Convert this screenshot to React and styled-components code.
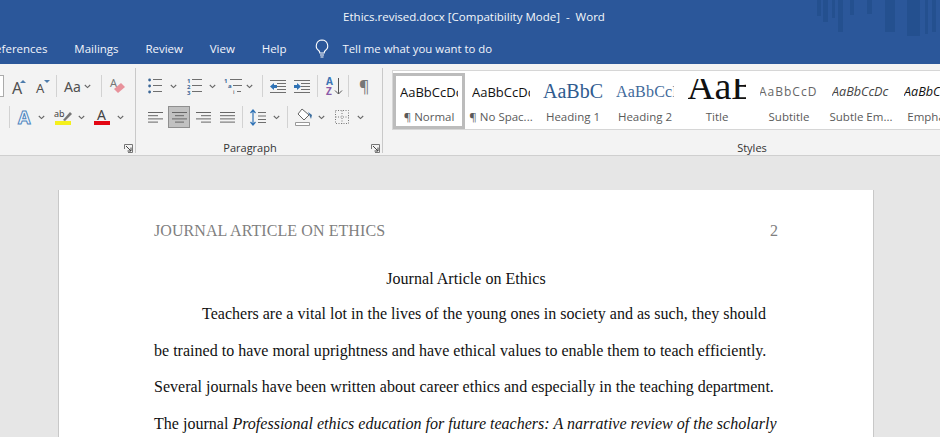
import React from "react";
import styled, { createGlobalStyle } from "styled-components";

const UI = `"Open Sans", "Noto Sans", sans-serif`;
const Global = createGlobalStyle`
  html, body { margin: 0; padding: 0; background: #e6e6e6; overflow: hidden; }
  #root { width: 940px; height: 437px; overflow: hidden; }
`;
const Shell = styled.div`width: 940px; height: 437px; overflow: hidden; display: flex; flex-direction: column; font-family: ${UI};`;
const TitleBar = styled.header`position: relative; flex: none; height: 64px; background: #2b579a; color: #fff; overflow: hidden;`;
const TitleText = styled.div`height: 32px; padding-left: 8px; display: flex; align-items: center; justify-content: center; font-size: 11.5px; white-space: pre; color: #f4f7fb;`;
const Tabs = styled.nav`height: 32px; margin-left: -12px; display: flex; align-items: center; gap: 26.8px; font-size: 11.5px; white-space: nowrap; color: #f2f5fa;`;
const Tell = styled.span`display: inline-flex; align-items: center; gap: 13px; margin-left: 2px; font-size: 11.4px;`;
const Watermark = styled.svg`position: absolute; top: 0; right: 0; width: 123px; height: 40px;`;

const Ribbon = styled.section`flex: none; height: 92px; box-sizing: border-box; padding: 4px 0 3px; display: flex; background: #f3f3f3; border-bottom: 1px solid #cfcfcf; overflow: hidden;`;
const Group = styled.div`flex: none; width: ${p => p.$w}px; box-sizing: border-box; height: 85px; padding-top: 7px; border-right: ${p => p.$plain ? "none" : "1px solid #c9c9c9"}; display: flex; flex-direction: column;`;
const ToolRow = styled.div`display: flex; align-items: center; height: 22px; padding-left: ${p => p.$pad || 0}px; & + & { margin-top: 9px; }`;
const Slot = styled.span`flex: none; display: inline-flex; align-items: center; justify-content: center; width: ${p => p.$w}px; height: 22px; margin-left: ${p => p.$ml || 0}px;`;
const Sep = styled.i`flex: none; width: 1px; height: 22px; background: #d2d2d2; margin-left: ${p => p.$ml}px;`;
const FontBox = styled.span`flex: none; width: 4px; height: 22px; box-sizing: border-box; background: #fff; border: 1px solid #ababab; border-left: none;`;
const ActiveButton = styled(Slot)`box-sizing: border-box; background: #c1c1c1; border: 1px solid #8f8f8f;`;
const GroupFoot = styled.div`position: relative; height: 14px; margin-top: ${p => p.$mt || 13}px; padding-right: ${p => p.$pr || 0}px; text-align: center; font-size: 11px; line-height: 14px; color: #333;`;
const Launcher = styled.svg`position: absolute; right: 2px; top: 3px; width: 9px; height: 9px;`;

const Gallery = styled.div`margin-left: 9px; margin-top: -5px; height: 60px; box-sizing: border-box; display: flex; padding-top: 2px; background: #fff; border: 1px solid #d6d6d6; border-right: none; width: 640px;`;
const StyleItem = styled.div`flex: none; width: 72px; height: 56px; box-sizing: border-box; border: 3px solid ${p => p.$on ? "#bcbcbc" : "transparent"}; display: flex; flex-direction: column; align-items: center; overflow: hidden;`;
const Preview = styled.div`width: ${p => p.$wide ? 60 : 58}px; height: 29px; margin-top: 1px; display: flex; align-items: center; overflow: hidden; white-space: nowrap;`;
const StyleLabel = styled.div`font-size: 11.5px; line-height: 16px; margin-top: 3px; color: #5a5a5a; white-space: nowrap;`;
const Body = styled.span`font: 13px ${UI}; color: #111;`;
const Head1 = styled.span`font: 20px "Liberation Serif", serif; color: #2f5b8f;`;
const Head2 = styled.span`font: 16px "Liberation Serif", serif; color: #3f6a9b; letter-spacing: .2px;`;
const Big = styled.span`display: block; height: 20px; margin: 0 0 5px -1px; overflow: hidden; font: 38px/14px "Liberation Serif", serif; color: #111;`;
const Sub = styled.span`font: 12px ${UI}; color: #666; letter-spacing: 1px; margin-left: -1px;`;
const Em = styled.span`font: italic 12.6px ${UI}; color: ${p => p.$c};`;

const Canvas = styled.main`flex: 1; min-height: 0; padding: 34px 0 0 58px; background: #e6e6e6;`;
const Page = styled.article`width: 816px; min-height: 300px; padding: 31px 95px 0; box-sizing: border-box; background: #fff; border: solid #c8c8c8; border-width: 0 1px; font: 16px "Liberation Serif", serif; color: #111; white-space: nowrap;`;
const RunningHead = styled.div`display: flex; justify-content: space-between; line-height: 20px; margin-bottom: 20px; color: #7f7f7f; letter-spacing: .08px;`;
const DocTitle = styled.div`text-align: center; line-height: 36.5px; letter-spacing: .03px; margin-bottom: -1.5px;`;
const Para = styled.p`margin: 0; line-height: 36.5px; letter-spacing: .015px;`;
const Indent = styled.span`display: inline-block; width: 48px;`;

const IconSvg = styled.svg`overflow: visible; display: block;`;
const I = ({ w, h, children }) => <IconSvg width={w} height={h} viewBox={`0 0 ${w} ${h}`} fill="none">{children}</IconSvg>;
const Chev = () => <I w={7} h={5}><path d="M.8 1l2.7 2.6L6.2 1" stroke="#666" strokeWidth="1.1" /></I>;
const L = ({ y, x1, x2, c = "#6f6f6f" }) => <path d={`M${x1} ${y + .5}H${x2}`} stroke={c} />;
const T = ({ x, y, s, c = "#555", b, children }) => <text x={x} y={y} fontSize={s} fill={c} fontWeight={b ? 700 : 400} fontFamily="Noto Sans, sans-serif">{children}</text>;
const GrowA = ({ flip }) => <I w={15} h={18}><T x={0} y={flip ? 16 : 17} s={flip ? 13 : 16} c="#505050">A</T>{flip ? <path d="M8 3h6l-3 3z" fill="#4d7cac" /> : <path d="M8 6h6l-3-3z" fill="#4d7cac" />}</I>;
const Eraser = () => <I w={16} h={18}><T x={0} y={10} s={11} c="#777">A</T><path d="M4 12l7-6 4 4-7 6z" fill="#e8929b" /></I>;
const OutlineA = () => <I w={15} h={18}><text x={0} y={16} fontSize={18} fontWeight="700" fontFamily="Noto Sans, sans-serif" fill="#f3f7fb" stroke="#4f86bf" strokeWidth="1">A</text></I>;
const Highlight = () => <I w={18} h={18}><T x={0} y={9} s={9} c="#444">ab</T><path d="M9 12l7-8 2 2-7 7z" fill="#777" /><path d="M1 13h16v4H1z" fill="#f5f01c" /></I>;
const RedA = () => <I w={16} h={18}><T x={3} y={12} s={14} c="#444">A</T><path d="M0 13h16v4H0z" fill="#e30613" /></I>;
const Bullets = () => <I w={15} h={15}>{[1, 7, 13].map(y => <g key={y}><circle cx="1.6" cy={y} r="1.4" fill="#3b6696" /><L y={y - 1} x1={5} x2={14} /></g>)}</I>;
const Numbers = () => <I w={15} h={15}>{[1, 7, 13].map((y, i) => <g key={y}><T x={0} y={y + 2.5} s={6} c="#3b6696" b>{i + 1}</T><L y={y - 1} x1={5} x2={15} /></g>)}</I>;
const Multi = () => <I w={19} h={16}><T x={0} y={5} s={6} c="#3b6696" b>1</T><L y={1} x1={6} x2={18} /><T x={4} y={10} s={6} c="#3b6696" b>a</T><L y={7} x1={9} x2={18} /><T x={9} y={16} s={6} c="#444">i</T><L y={13} x1={13} x2={17} /></I>;
const IndentIcon = ({ rev }) => <I w={16} h={13}>{[0, 3, 6, 9, 12].map(y => <L key={y} y={y} x1={y === 0 || y === 12 ? 0 : 7} x2={16} />)}<path d={rev ? "M0 6.5L4 3v2h3v3H4v2z" : "M7 6.5L3 3v2H0v3h3v2z"} fill="#2f72b5" /></I>;
const Sort = () => <I w={17} h={20}><T x={0} y={9} s={10} c="#3b75b5" b>A</T><T x={0} y={19} s={10} c="#8b5aa8" b>Z</T><path d="M12.5 2v16M9 14.5l3.500 3.500 3.500-3.500" stroke="#555" /></I>;
const Pilcrow = () => <I w={15} h={18}><T x={2} y={15} s={16} c="#777">¶</T></I>;
const Align = ({ k }) => {
  const r = k === "j"
    ? [[0, 15], [0, 15], [0, 15], [0, 15]]
    : k === "l" ? [[0, 15], [0, 10], [0, 15], [0, 10]]
    : k === "c" ? [[0, 15], [3, 12], [0, 15], [3, 12]]
    : [[0, 15], [5, 15], [0, 15], [5, 15]];
  return <I w={15} h={11}>{r.map(([a, b], i) => <L key={i} y={i * 3.2} x1={a} x2={b} c="#666" />)}</I>;
};
const Spacing = () => <I w={16} h={17}><path d="M3 1v15M.5 4L3 1l2.500 3M.5 13L3 16l2.500-3" stroke="#2f72b5" strokeWidth="1.2" />{[3, 6.5, 10, 13].map(y => <L key={y} y={y} x1={8} x2={16} />)}</I>;
const Shade = () => <I w={17} h={18}><path d="M7 1l7 6-5 5-6-6z" fill="#fff" stroke="#666" /><path d="M13 4l4 3-1 4z" fill="#3f6f9f" /><path d="M.5 14.500h14v3H.5z" fill="#fff" stroke="#999" /></I>;
const Borders = () => <I w={14} h={14}><path d="M.5.5h13v13H.5zM7 .5v13M.5 7h13" stroke="#777" strokeDasharray="1 1.500" /></I>;
const Launch = () => <Launcher viewBox="0 0 9 9" fill="none"><path d="M.5 5V.5H8.500M8.500 .5V8.500H4" stroke="#777" /><path d="M2 2l5 5M7 3.500V7H3.500" stroke="#444" /></Launcher>;
const Bulb = () => <I w={14} h={19}><path d="M7 1a5.800 5.800 0 0 0-3.300 10.500c.8.7 1.100 1.500 1.100 2.500h4.400c0-1 .3-1.800 1.100-2.500A5.800 5.800 0 0 0 7 1zM5 16h4M5.500 18h3" stroke="#fff" strokeWidth="1.100" /></I>;

const bars = [[0, 4, 16], [6, 5, 22], [15, 3, 18], [21, 5, 32], [33, 4, 15], [50, 5, 14], [68, 10, 32], [90, 13, 36], [108, 3, 34], [115, 4, 32]];

export default function App() {
  return (
    <Shell>
      <Global />
      <TitleBar>
        <Watermark viewBox="0 0 123 40">
          {bars.map(([x, w, h]) => <rect key={x} x={x} y={0} width={w} height={h} fill="#1f4a86" opacity=".55" />)}
        </Watermark>
        <TitleText>Ethics.revised.docx [Compatibility Mode]  -  Word</TitleText>
        <Tabs>
          <span>References</span><span>Mailings</span><span>Review</span><span>View</span><span>Help</span>
          <Tell><Bulb /><span>Tell me what you want to do</span></Tell>
        </Tabs>
      </TitleBar>
      <Ribbon>
        <Group $w={136}>
          <ToolRow>
            <FontBox />
            <Slot $ml={8} $w={15}><GrowA /></Slot>
            <Slot $ml={9} $w={15}><GrowA flip /></Slot>
            <Sep $ml={5} />
            <Slot $ml={7} $w={17}><I w={17} h={16}><T x={0} y={14} s={14} c="#505050">Aa</T></I></Slot>
            <Slot $ml={3} $w={7}><Chev /></Slot>
            <Sep $ml={10} />
            <Slot $ml={8} $w={16}><Eraser /></Slot>
          </ToolRow>
          <ToolRow>
            <Sep $ml={9} />
            <Slot $ml={8} $w={15}><OutlineA /></Slot>
            <Slot $ml={5} $w={7}><Chev /></Slot>
            <Slot $ml={9} $w={18}><Highlight /></Slot>
            <Slot $ml={6} $w={7}><Chev /></Slot>
            <Slot $ml={9} $w={16}><RedA /></Slot>
            <Slot $ml={7} $w={7}><Chev /></Slot>
          </ToolRow>
          <GroupFoot><Launch /></GroupFoot>
        </Group>
        <Group $w={247}>
          <ToolRow $pad={12}>
            <Slot $w={15}><Bullets /></Slot>
            <Slot $ml={7} $w={7}><Chev /></Slot>
            <Slot $ml={10} $w={15}><Numbers /></Slot>
            <Slot $ml={7} $w={7}><Chev /></Slot>
            <Slot $ml={8} $w={19}><Multi /></Slot>
            <Slot $ml={3} $w={7}><Chev /></Slot>
            <Sep $ml={9} />
            <Slot $ml={7} $w={16}><IndentIcon rev /></Slot>
            <Slot $ml={8} $w={16}><IndentIcon /></Slot>
            <Sep $ml={7} />
            <Slot $ml={8} $w={17}><Sort /></Slot>
            <Sep $ml={5} />
            <Slot $ml={8} $w={15}><Pilcrow /></Slot>
          </ToolRow>
          <ToolRow $pad={12}>
            <Slot $w={15}><Align k="l" /></Slot>
            <ActiveButton $ml={5} $w={22}><Align k="c" /></ActiveButton>
            <Slot $ml={6} $w={15}><Align k="r" /></Slot>
            <Slot $ml={9} $w={15}><Align k="j" /></Slot>
            <Sep $ml={7} />
            <Slot $ml={7} $w={16}><Spacing /></Slot>
            <Slot $ml={7} $w={7}><Chev /></Slot>
            <Sep $ml={7} />
            <Slot $ml={7} $w={17}><Shade /></Slot>
            <Slot $ml={6} $w={7}><Chev /></Slot>
            <Slot $ml={10} $w={14}><Borders /></Slot>
            <Slot $ml={8} $w={7}><Chev /></Slot>
          </ToolRow>
          <GroupFoot $pr={18}>Paragraph<Launch /></GroupFoot>
        </Group>
        <Group $w={738} $plain>
          <Gallery>
            <StyleItem $on><Preview><Body>AaBbCcDc</Body></Preview><StyleLabel>¶ Normal</StyleLabel></StyleItem>
            <StyleItem><Preview><Body>AaBbCcDc</Body></Preview><StyleLabel>¶ No Spac...</StyleLabel></StyleItem>
            <StyleItem><Preview $wide><Head1>AaBbC</Head1></Preview><StyleLabel>Heading 1</StyleLabel></StyleItem>
            <StyleItem><Preview><Head2>AaBbCcI</Head2></Preview><StyleLabel>Heading 2</StyleLabel></StyleItem>
            <StyleItem><Preview><Big>AaB</Big></Preview><StyleLabel>Title</StyleLabel></StyleItem>
            <StyleItem><Preview><Sub>AaBbCcD</Sub></Preview><StyleLabel>Subtitle</StyleLabel></StyleItem>
            <StyleItem><Preview><Em $c="#444">AaBbCcDc</Em></Preview><StyleLabel>Subtle Em...</StyleLabel></StyleItem>
            <StyleItem><Preview><Em $c="#111">AaBbCcDc</Em></Preview><StyleLabel>Emphasis</StyleLabel></StyleItem>
          </Gallery>
          <GroupFoot $mt={11}>Styles</GroupFoot>
        </Group>
      </Ribbon>
      <Canvas>
        <Page>
          <RunningHead><span>JOURNAL ARTICLE ON ETHICS</span><span>2</span></RunningHead>
          <DocTitle>Journal Article on Ethics</DocTitle>
          <Para>
            <Indent />Teachers are a vital lot in the lives of the young ones in society and as such, they should<br />
            be trained to have moral uprightness and have ethical values to enable them to teach efficiently.<br />
            Several journals have been written about career ethics and especially in the teaching department.<br />
            The journal <em>Professional ethics education for future teachers: A narrative review of the scholarly</em>
          </Para>
        </Page>
      </Canvas>
    </Shell>
  );
}
